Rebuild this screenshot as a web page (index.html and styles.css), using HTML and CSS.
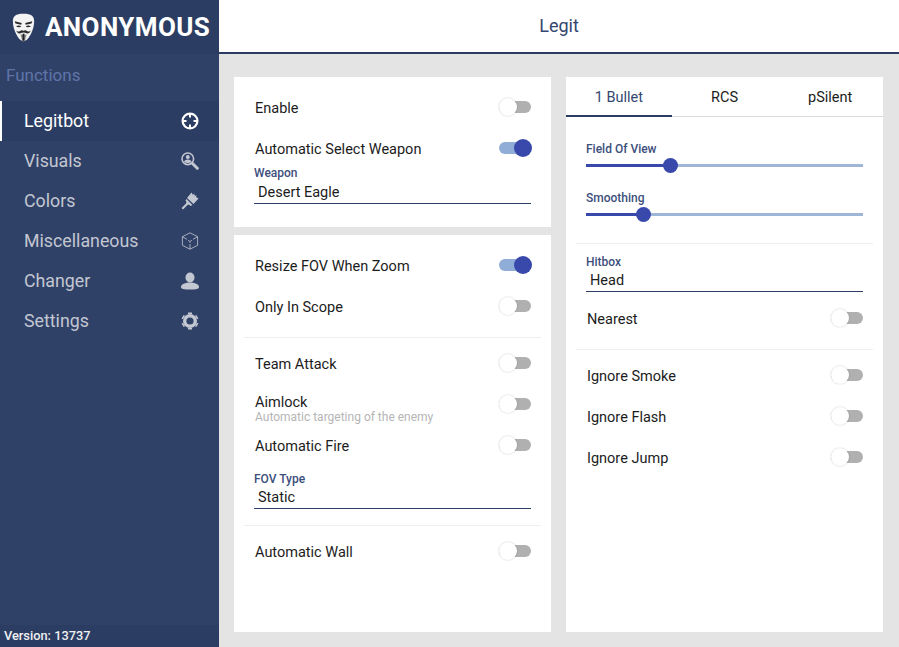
FILE: index.html
```html
<!DOCTYPE html>
<html lang="en">
<head>
  <meta charset="UTF-8" />
  <meta name="viewport" content="width=device-width, initial-scale=1.0" />
  <title>Anonymous</title>
  <link rel="stylesheet" href="styles.css">
</head>
<body>

  <!-- Sidebar -->
  <aside class="sidebar">
    <div class="brand">
      <svg class="mask" viewBox="0 0 26 32" width="23" height="29">
        <path d="M13 .5C6 .5 1.500 2 1 8C.7 14 3 20 5 24C7 28 10 31.500 13 31.500C16 31.500 19 28 21 24C23 20 25.300 14 25 8C24.500 2 20 .5 13 .5Z" fill="#f4f4f4"/>
        <path d="M3 9L11 11L10.500 13L4 11.500ZM23 9L15 11L15.500 13L22 11.500Z" fill="#2a2a2a"/>
        <path d="M4.500 14.500Q8 12.800 10.500 14.800Q8 16.500 4.500 14.500ZM15.500 14.800Q18 12.800 21.500 14.500Q18 16.500 15.500 14.800Z" fill="#2a2a2a"/>
        <path d="M4.500 19.500Q7 21.500 9 20Q11 18.500 13 19.800Q15 18.500 17 20Q19 21.500 21.500 19.500Q19.500 23.500 16.500 22.500Q13 21 9.500 22.500Q6.500 23.500 4.500 19.500Z" fill="#2a2a2a"/>
        <path d="M9.500 24H16.500L14.500 31H11.500Z" fill="#8a8a8a"/>
        <path d="M12 23H14V31H12Z" fill="#1e1e1e"/>
      </svg>
      <span class="brand-name">ANONYMOUS</span>
    </div>
    <div class="nav-title">Functions</div>
    <nav class="nav">
      <a class="nav-item active" href="#legitbot">Legitbot
        <svg viewBox="0 0 18 18" width="18" height="18"><circle cx="9" cy="9" r="7.400" fill="none" stroke="currentColor" stroke-width="2.200"/><path d="M9 2V5.500M9 12.500V16M2 9H5.500M12.500 9H16" stroke="currentColor" stroke-width="2"/></svg>
      </a>
      <a class="nav-item" href="#visuals">Visuals
        <svg viewBox="0 0 18 18" width="18" height="18"><circle cx="6.800" cy="6.800" r="5.800" fill="none" stroke="currentColor" stroke-width="1.600"/><circle cx="6.800" cy="5" r="2" fill="currentColor"/><path d="M3 10Q3.500 7.500 6.800 7.500Q10 7.500 10.600 10Q6.800 12 3 10Z" fill="currentColor"/><path d="M11.500 11.500L16.300 16.300" stroke="currentColor" stroke-width="3" stroke-linecap="round"/></svg>
      </a>
      <a class="nav-item" href="#colors">Colors
        <svg viewBox="0 0 18 18" width="18" height="18"><path d="M10.500 .5L12 3L13 1.500L14 4L15.500 3L15 5L17.500 6.500L12.500 12L6 6Z" fill="currentColor"/><path d="M5.500 7L11.500 13L9.500 14L8 12.500L6.500 13L2 17.500L.5 16L5 11.500L5.500 10L4.500 8.500Z" fill="currentColor"/></svg>
      </a>
      <a class="nav-item" href="#misc">Miscellaneous
        <svg viewBox="0 0 18 18" width="18" height="18"><path d="M9 .8L16.600 4.700V13.300L9 17.200L1.400 13.300V4.700ZM1.400 4.700L6 7.300M16.600 4.700L12 7.300M9 12V17.200" fill="none" stroke="currentColor" stroke-width=".8"/><path d="M7 8.300L9 9.500L11 8.300M9 9.500V11" fill="none" stroke="currentColor" stroke-width=".7"/></svg>
      </a>
      <a class="nav-item" href="#changer">Changer
        <svg viewBox="0 0 18 18" width="18" height="18"><ellipse cx="9" cy="5.500" rx="4.500" ry="5" fill="currentColor"/><path d="M0 15C0 12 4.500 10.500 9 10.500C13.500 10.500 18 12 18 15C18 17 15 17.500 9 17.500C3 17.500 0 17 0 15Z" fill="currentColor"/></svg>
      </a>
      <a class="nav-item" href="#settings">Settings
        <svg viewBox="0 0 18 18" width="18" height="18"><circle cx="9" cy="9" r="5.300" fill="none" stroke="currentColor" stroke-width="3.400"/><path d="M9 2V.5M9 16V17.500M2.900 5.500L1.600 4.700M15.100 12.500L16.400 13.300M2.900 12.500L1.600 13.300M15.100 5.500L16.400 4.700" stroke="currentColor" stroke-width="4"/></svg>
      </a>
    </nav>
    <div class="version">Version: 13737</div>
  </aside>

  <main class="main">
    <header class="topbar">Legit</header>

    <div class="content">
      <!-- Left column -->
      <div class="column">
        <section class="card card-top">
          <div class="row"><span>Enable</span><span class="switch"></span></div>
          <div class="row"><span>Automatic Select Weapon</span><span class="switch on"></span></div>
          <div class="select select-first">
            <label>Weapon</label>
            <div class="select-value">Desert Eagle</div>
          </div>
        </section>

        <section class="card card-fill">
          <div class="row"><span>Resize FOV When Zoom</span><span class="switch on"></span></div>
          <div class="row"><span>Only In Scope</span><span class="switch"></span></div>
          <hr class="divider divider-scope">
          <div class="row"><span>Team Attack</span><span class="switch"></span></div>
          <div class="row">
            <span class="row-text">Aimlock<small>Automatic targeting of the enemy</small></span>
            <span class="switch"></span>
          </div>
          <div class="row"><span>Automatic Fire</span><span class="switch"></span></div>
          <div class="select select-fov">
            <label>FOV Type</label>
            <div class="select-value">Static</div>
          </div>
          <hr class="divider divider-fov">
          <div class="row"><span>Automatic Wall</span><span class="switch"></span></div>
        </section>
      </div>

      <!-- Right column -->
      <section class="card card-right">
        <div class="tabs">
          <a class="tab active" href="#bullet">1 Bullet</a>
          <a class="tab" href="#rcs">RCS</a>
          <a class="tab" href="#psilent">pSilent</a>
        </div>
        <div class="sliders">
          <div class="slider">
            <label>Field Of View</label>
            <div class="track"><div class="fill" style="width: 85px"></div></div>
          </div>
          <div class="slider">
            <label>Smoothing</label>
            <div class="track"><div class="fill" style="width: 58px"></div></div>
          </div>
        </div>
        <hr class="divider divider-slider">
        <div class="select select-hitbox">
          <label>Hitbox</label>
          <div class="select-value">Head</div>
        </div>
        <div class="row row-nearest"><span>Nearest</span><span class="switch"></span></div>
        <hr class="divider divider-nearest">
        <div class="row"><span>Ignore Smoke</span><span class="switch"></span></div>
        <div class="row"><span>Ignore Flash</span><span class="switch"></span></div>
        <div class="row"><span>Ignore Jump</span><span class="switch"></span></div>
      </section>
    </div>
  </main>

</body>
</html>
```

FILE: styles.css
```css
* {
  box-sizing: border-box;
}

body {
  font-family: Roboto, Arial, sans-serif;
  margin: 0;
  padding: 0;
  width: 899px;
  height: 647px;
  overflow: hidden;
  display: flex;
  background: #e4e4e4;
  color: #1c1c1c;
}

/* Sidebar */
.sidebar {
  width: 219px;
  flex-shrink: 0;
  display: flex;
  flex-direction: column;
  background: #304168;
}

.brand {
  height: 54px;
  display: flex;
  align-items: center;
  gap: 10px;
  padding: 0 0 0 12px;
  background: #2c3d63;
}

.mask {
  margin-top: 1px;
  flex-shrink: 0;
}

.brand-name {
  color: #ffffff;
  font-size: 26px;
  font-weight: 700;
  letter-spacing: 0.4px;
}

.nav-title {
  height: 47px;
  padding: 11px 0 0 6px;
  color: #5f75a8;
  font-size: 17px;
}

.nav {
  display: flex;
  flex-direction: column;
}

.nav-item {
  height: 40px;
  display: flex;
  align-items: center;
  justify-content: space-between;
  padding: 0 20px 1px 24px;
  color: #c3c7d1;
  font-size: 17.8px;
  text-decoration: none;
}

.nav-item svg {
  margin-top: 1px;
}

.nav-item.active {
  background: #2c3d63;
  color: #ffffff;
  border-left: 2px solid #ffffff;
  padding-left: 22px;
}

.version {
  margin-top: auto;
  height: 22px;
  padding: 3px 0 0 4px;
  background: #2c3d63;
  color: #f0f0f0;
  font-size: 12.8px;
  font-weight: 500;
}

/* Main */
.main {
  flex: 1;
  display: flex;
  flex-direction: column;
}

.topbar {
  height: 54px;
  flex-shrink: 0;
  display: flex;
  align-items: center;
  justify-content: center;
  padding-bottom: 2px;
  background: #ffffff;
  border-bottom: 2px solid #2c3d63;
  color: #34466f;
  font-size: 18px;
}

.content {
  flex: 1;
  display: flex;
  gap: 15px;
  padding: 23px 16px 15px 15px;
}

.column {
  width: 317px;
  display: flex;
  flex-direction: column;
  gap: 8px;
}

.card {
  background: #ffffff;
}

.card-top {
  height: 150px;
  padding-top: 10px;
}

.card-fill {
  flex: 1;
  padding-top: 10px;
}

.card-right {
  width: 317px;
}

/* Rows */
.row {
  height: 41px;
  display: flex;
  align-items: center;
  justify-content: space-between;
  padding: 0 20px 0 21px;
  font-size: 14.5px;
}

.row > span:first-child {
  margin-top: 2px;
}

.row-nearest {
  margin-top: 6px;
}

.row > span.row-text {
  display: flex;
  flex-direction: column;
  margin-top: 10px;
  line-height: 14px;
}

.row-text small {
  color: #b5b5b5;
  font-size: 12px;
  line-height: 14px;
}

.divider {
  height: 1px;
  margin: 10px 10px 6px;
  border: none;
  background: #eeeeee;
}

.divider-scope {
  margin-bottom: 5px;
}

.divider-fov {
  margin: 16px 10px 5px;
}

.divider-slider {
  margin: 3px 10px 0;
}

.divider-nearest {
  margin: 10px 10px 5px;
}

/* Switch */
.switch {
  position: relative;
  width: 32px;
  height: 12px;
  border-radius: 6px;
  margin-top: -1px;
  background: #b0b0b0;
}

.switch::after {
  content: "";
  position: absolute;
  left: 0;
  top: -3px;
  width: 18px;
  height: 18px;
  border-radius: 50%;
  background: #ffffff;
  box-shadow: 0 0 2px rgba(0,0,0,0.22);
}

.switch.on {
  background: #8fadd6;
}

.switch.on::after {
  left: auto;
  right: -1px;
  background: #3949ab;
  box-shadow: none;
}

/* Select */
.select {
  margin: 0 20px;
  border-bottom: 1px solid #2c3d63;
  height: 37px;
}

.select label {
  display: block;
  color: #3d4f7c;
  font-size: 12px;
  font-weight: 500;
  line-height: 14px;
}

.select-value {
  padding-left: 4px;
  font-size: 14.5px;
  line-height: 24px;
}

.select-first {
  margin-top: -3px;
  height: 38px;
}

.select-first .select-value {
  line-height: 26px;
}

.select-fov {
  margin-top: 6px;
}

.select-hitbox {
  margin-top: 11px;
}

/* Tabs */
.tabs {
  display: flex;
  height: 40px;
  border-bottom: 1px solid #dcdcdc;
}

.tab {
  width: 106px;
  height: 40px;
  display: flex;
  align-items: center;
  justify-content: center;
  color: #1c1c1c;
  font-size: 14.5px;
  text-decoration: none;
}

.tab.active {
  color: #34466f;
  padding-top: 2px;
  border-bottom: 2px solid #2c3d63;
}

/* Sliders */
.sliders {
  padding: 25px 20px 0;
}

.slider {
  height: 49px;
}

.slider label {
  display: block;
  color: #3d4f7c;
  font-size: 12px;
  font-weight: 500;
  line-height: 14px;
}

.track {
  height: 3px;
  margin-top: 8px;
  background: #9fb6d6;
}

.fill {
  position: relative;
  height: 3px;
  background: #3949ab;
}

.fill::after {
  content: "";
  position: absolute;
  right: -7px;
  top: -6px;
  width: 15px;
  height: 15px;
  border-radius: 50%;
  background: #3949ab;
}
```
